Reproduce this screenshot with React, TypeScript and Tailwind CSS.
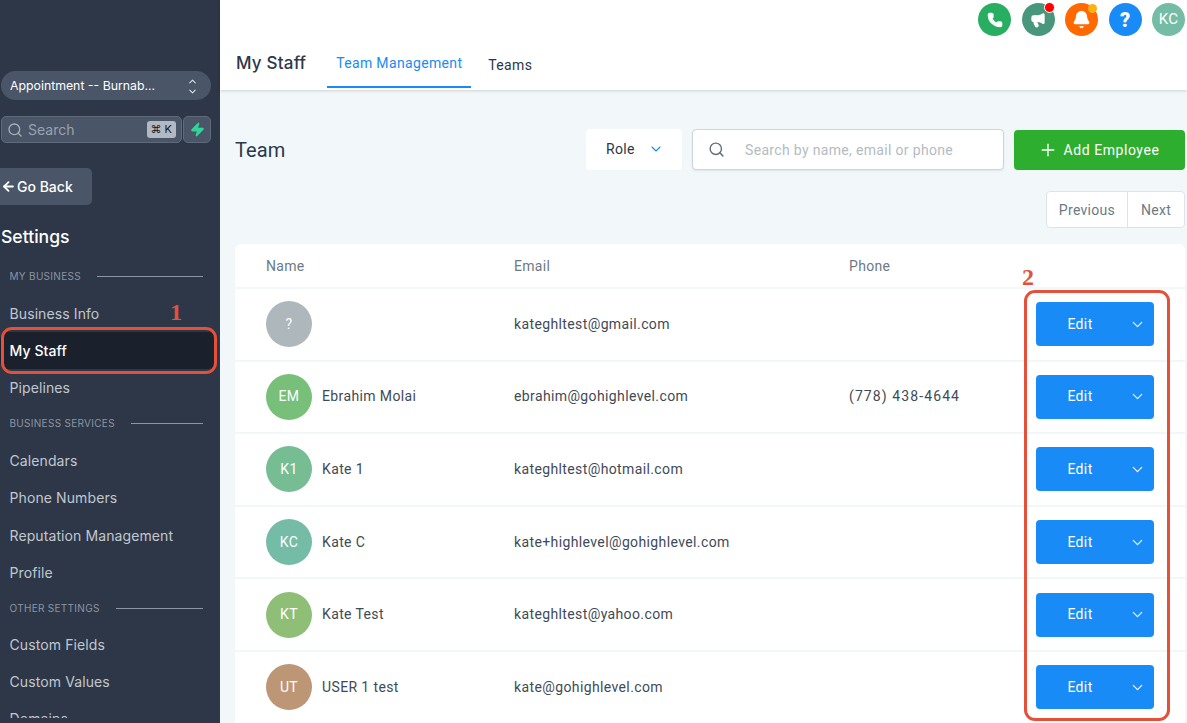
import { ChevronDown, ChevronUp, Plus, Search, ArrowLeft, Phone, Megaphone, Bell, Zap } from "lucide-react";

const rows = [
  { i: "?", c: "bg-[#aeb7bc]", n: "", e: "kateghltest@gmail.com", p: "" },
  { i: "EM", c: "bg-[#78c07a]", n: "Ebrahim Molai", e: "ebrahim@gohighlevel.com", p: "(778) 438-4644" },
  { i: "K1", c: "bg-[#76bd94]", n: "Kate 1", e: "kateghltest@hotmail.com", p: "" },
  { i: "KC", c: "bg-[#74bca6]", n: "Kate C", e: "kate+highlevel@gohighlevel.com", p: "" },
  { i: "KT", c: "bg-[#8fbf77]", n: "Kate Test", e: "kateghltest@yahoo.com", p: "" },
  { i: "UT", c: "bg-[#bd9675]", n: "USER 1 test", e: "kate@gohighlevel.com", p: "" },
];

function Section({ label }: { label: string }) {
  return (
    <div className="flex items-center h-[34.5px] pl-[9.5px] pr-[17px] gap-[16px]">
      <span className="text-[10px] tracking-[0.3px] text-[#8c95a3] uppercase whitespace-nowrap">{label}</span>
      <span className="h-px bg-[#8c95a3] flex-1" />
    </div>
  );
}

function Item({ label, active }: { label: string; active?: boolean }) {
  return (
    <div className={`h-[37.3px] flex items-center pl-[9.5px] text-[14px] tracking-[0.1px] ${active ? "text-white font-medium bg-[#1a202c] rounded-[8px] mr-[4px]" : "text-[#c2c7cf]"}`}>
      {label}
    </div>
  );
}

export default function App() {
  return (
    <div className="relative flex h-[723px] w-[1187px] overflow-hidden bg-[#f2f7fa] font-['Roboto',sans-serif]">
      <aside className="w-[220px] shrink-0 h-[723px] bg-[#2d3748] font-['Inter',sans-serif] text-[#c2c7cf]">
        <div className="h-[718px] overflow-hidden pt-[71px]">
          <div className="ml-[1px] w-[210px] h-[29px] rounded-full bg-[#4a5568] flex items-center pl-[9px] pr-[13px] justify-between text-white text-[12.3px] pt-[1px]">
            <span>Appointment -- Burnab...</span>
            <span className="flex flex-col items-center text-[#e2e5e9] -space-y-[1px]">
              <ChevronUp size={11} strokeWidth={2.2} />
              <ChevronDown size={11} strokeWidth={2.2} />
            </span>
          </div>
          <div className="flex mt-[16px] ml-[1px] gap-[1px]">
            <div className="w-[181px] h-[27px] rounded-[5px] bg-[#4a5568] border border-[#5f6a7b] flex items-center pl-[5px] pr-[5px]">
              <Search size={16} className="text-[#a9b0ba]" />
              <span className="ml-[5px] text-[14px] text-[#9aa2ae] flex-1">Search</span>
              <span className="bg-[#b3b9c3] text-[#111827] text-[11px] rounded-[3px] px-[4px] h-[17px] flex items-center">⌘ K</span>
            </div>
            <div className="w-[28px] h-[27px] rounded-[5px] bg-[#4a5568] border border-[#5f6a7b] flex items-center justify-center">
              <Zap size={15} className="text-[#34d399] fill-[#34d399]" />
            </div>
          </div>
          <div className="mt-[25px] w-[92px] h-[37px] rounded-r-[5px] bg-[#4a5568] flex items-center pl-[1px] gap-[1px] text-white text-[14px] font-medium">
            <ArrowLeft size={15} strokeWidth={3} />
            <span>Go Back</span>
          </div>
          <div className="mt-[20px] pl-[1px] h-[24px] flex items-center text-white text-[17.6px] font-medium">Settings</div>
          <div className="mt-[10px]"><Section label="My Business" /></div>
          <div className="pt-[1px]">
            <Item label="Business Info" />
            <Item label="My Staff" active />
            <Item label="Pipelines" />
          </div>
          <Section label="Business Services" />
          <div className="pt-[1px]">
            <Item label="Calendars" />
            <Item label="Phone Numbers" />
            <Item label="Reputation Management" />
            <Item label="Profile" />
          </div>
          <Section label="Other Settings" />
          <div>
            <Item label="Custom Fields" />
            <Item label="Custom Values" />
            <Item label="Domains" />
          </div>
        </div>
      </aside>

      <main className="relative flex-1 min-w-0 flex flex-col">
        <header className="h-[90px] bg-white shadow-[0_1px_3px_rgba(0,0,0,0.15)] flex flex-col shrink-0">
          <div className="flex justify-end items-center gap-[10.5px] pt-[2px] pr-[2px] h-[37px]">
            <span className="w-[33px] h-[33px] rounded-full bg-[#27ae60] flex items-center justify-center text-white"><Phone size={16} fill="white" /></span>
            <span className="relative w-[33px] h-[33px] rounded-full bg-[#48977d] flex items-center justify-center text-white">
              <Megaphone size={16} fill="white" />
              <span className="absolute -top-[1px] right-0 w-[11px] h-[11px] rounded-full bg-[#ff0000] border border-white" />
            </span>
            <span className="relative w-[33px] h-[33px] rounded-full bg-[#ff6900] flex items-center justify-center text-white">
              <Bell size={19} fill="white" />
              <span className="absolute top-[1px] right-[1px] w-[9px] h-[9px] rounded-full bg-[#fbb116]" />
            </span>
            <span className="w-[33px] h-[33px] rounded-full bg-[#188bf6] flex items-center justify-center text-white text-[20px] font-black">?</span>
            <span className="w-[33px] h-[33px] rounded-full bg-[#74bca6] flex items-center justify-center text-white text-[15px] tracking-[0.3px]">KC</span>
          </div>
          <div className="flex items-start pl-[16px] h-[53px]">
            <div className="text-[17px] text-[#2d3748] font-medium mt-[14px] tracking-[0.2px] font-['Inter',sans-serif]">My Staff</div>
            <div className="ml-[21px] w-[144px] h-[51px] border-b-2 border-[#188bf6] text-[#188bf6] text-[14px] text-center pt-[16px] tracking-[0.35px]">Team Management</div>
            <div className="ml-[17px] text-[14px] text-[#2d3748] pt-[18px] tracking-[0.35px]">Teams</div>
          </div>
        </header>

        <div className="pl-[15px] pr-[2px] flex flex-col">
          <div className="flex items-center h-[42px] mt-[38px]">
            <div className="text-[20px] text-[#2d3748] flex-1 tracking-[0.1px] pt-[2px]">Team</div>
            <div className="w-[96px] h-[41px] bg-white rounded-[4px] flex items-center pl-[20px] gap-[13px] text-[14px] text-[#2d3748] tracking-[0.35px]">
              Role <ChevronDown size={16} strokeWidth={1.6} className="text-[#188bf6]" />
            </div>
            <div className="ml-[10px] w-[312px] h-[41px] bg-white rounded-[4px] border border-[#cbd5e0] shadow-[0_1px_2px_rgba(0,0,0,0.08)] flex items-center pl-[15px] text-[14px]">
              <Search size={17} className="text-[#607179]" />
              <span className="ml-[20px] pt-[2px] text-[#b4bbc2] tracking-[0.33px]">Search by name, email or phone</span>
            </div>
            <div className="ml-[10px] w-[171px] h-[40px] mt-[1px] bg-[#2eae2e] rounded-[4px] flex items-center justify-center gap-[6px] pr-[2px] text-white text-[14px] tracking-[0.55px]">
              <Plus size={20} strokeWidth={1.6} />
              <span className="pt-[1px]">Add Employee</span>
            </div>
          </div>
          <div className="flex justify-end mt-[21px]">
            <div className="flex h-[37px] bg-white border border-[#dfe3e8] rounded-[4px] text-[14px] text-[#6b7a85] tracking-[0.3px]">
              <span className="w-[81px] flex items-center justify-center border-r border-[#dfe3e8] pt-[1px]">Previous</span>
              <span className="w-[56px] flex items-center justify-center pt-[1px]">Next</span>
            </div>
          </div>
          <div className="mt-[16px] bg-white rounded-t-[6px] text-[14px] text-[#3f4a57]">
            <div className="grid grid-cols-[248px_335px_187px_118px] pl-[31px] pt-[2px] h-[45px] items-center border-b-[2px] border-[#f2f7fa] text-[#6b7a85] tracking-[0.3px]">
              <span>Name</span>
              <span>Email</span>
              <span>Phone</span>
            </div>
            {rows.map((r) => (
              <div key={r.e} className="grid grid-cols-[248px_335px_187px_118px] pl-[31px] h-[72.6px] items-center border-b-[2px] border-[#f2f7fa] tracking-[0.38px]">
                <div className="flex items-center gap-[10px]">
                  <span className={`w-[46px] h-[46px] rounded-full ${r.c} flex items-center justify-center text-white`}>{r.i}</span>
                  <span>{r.n}</span>
                </div>
                <span>{r.e}</span>
                <span className="tracking-[1.1px]">{r.p}</span>
                <div className="h-[44px] w-[118px] bg-[#188bf6] rounded-[4px] flex items-center text-white">
                  <span className="flex-1 text-center pr-[5px]">Edit</span>
                  <ChevronDown size={17} strokeWidth={1.5} className="mr-[8px]" />
                </div>
              </div>
            ))}
          </div>
        </div>
      </main>

      <div className="absolute left-[1px] top-[327px] w-[216px] h-[47px] border-[3px] border-[#e5503a] rounded-[11px]" />
      <div className="absolute left-[170px] top-[298px] text-[#e5503a] text-[24px] leading-[28px] font-bold font-['Liberation_Serif',serif]">1</div>
      <div className="absolute left-[1024px] top-[290px] w-[146px] h-[431px] border-[3px] border-[#e5503a] rounded-[11px]" />
      <div className="absolute left-[1022px] top-[263px] text-[#e5503a] text-[24px] leading-[28px] font-bold font-['Liberation_Serif',serif]">2</div>
    </div>
  );
}
